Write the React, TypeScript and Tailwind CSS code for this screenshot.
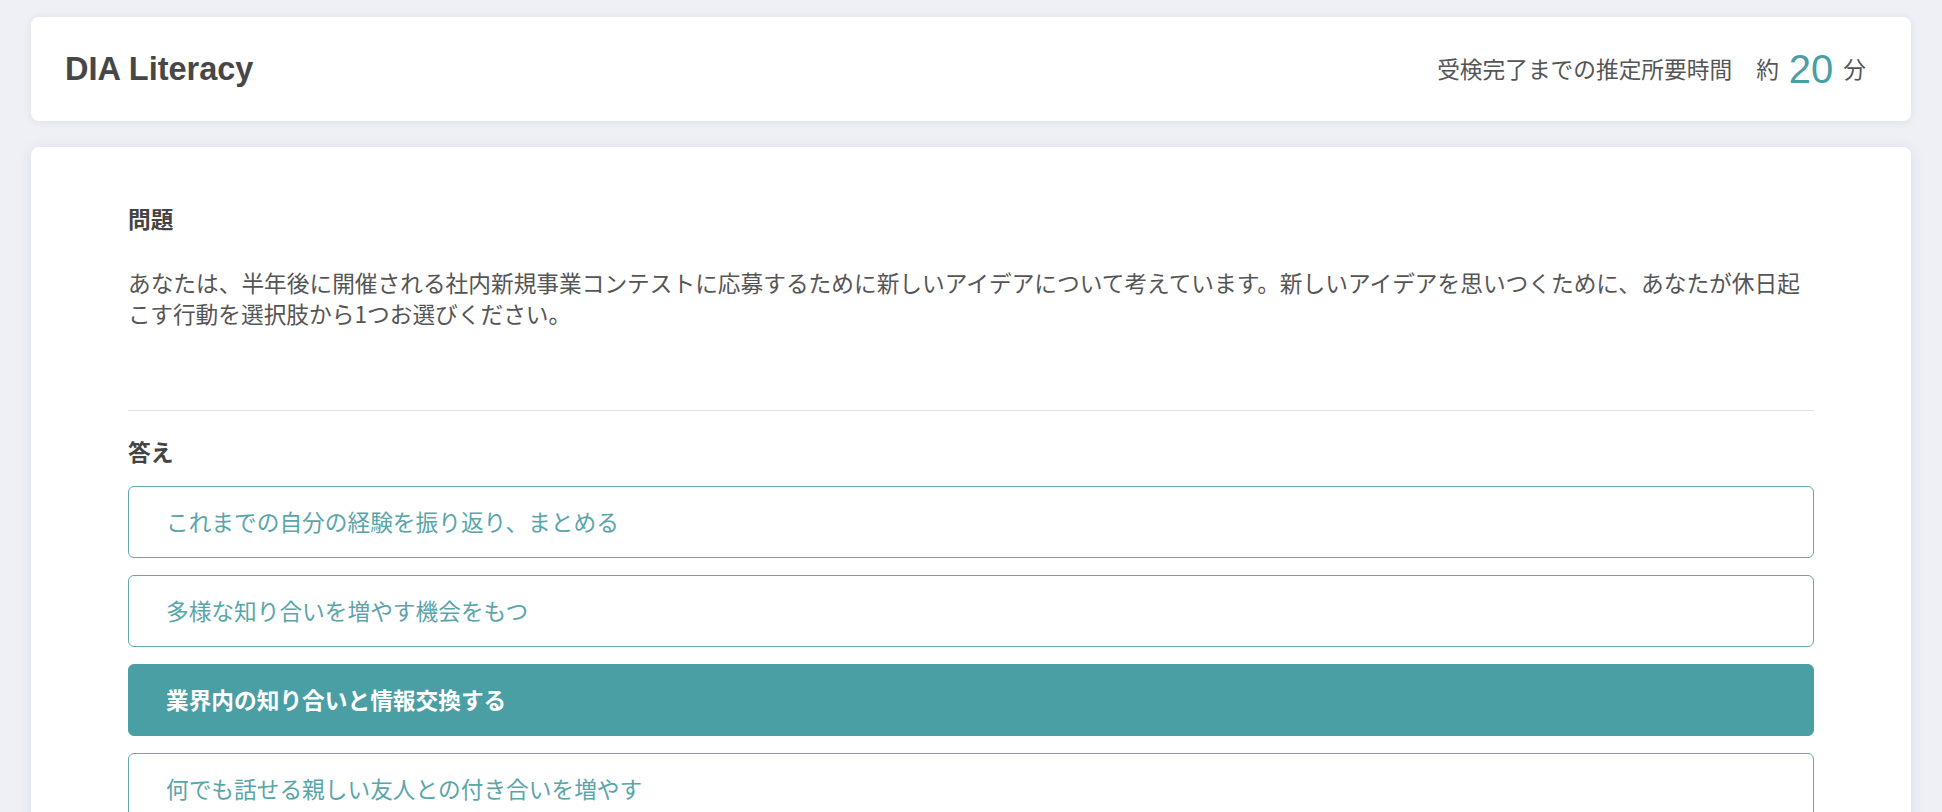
const JP = "font-['Noto_Sans_CJK_JP','Noto_Sans',sans-serif]";

const OPTIONS = [
  { id: 1, label: 'これまでの自分の経験を振り返り、まとめる', selected: false },
  { id: 2, label: '多様な知り合いを増やす機会をもつ', selected: false },
  { id: 3, label: '業界内の知り合いと情報交換する', selected: true },
  { id: 4, label: '何でも話せる親しい友人との付き合いを増やす', selected: false },
];

export default function App() {
  return (
    <div className={`min-h-screen bg-[#eef0f6] px-[31px] pt-[17px] pb-[40px] ${JP}`}>
      {/* Header */}
      <header className="flex h-[104px] items-center justify-between rounded-[8px] bg-white pl-[34px] pr-[45px] shadow-[0_1px_8px_rgba(30,40,80,0.08)]">
        <h1 className="font-['Liberation_Sans',Arial,sans-serif] text-[32.5px] font-bold text-[#474747]">DIA Literacy</h1>
        <div className="flex items-center text-[22.7px] text-[#555]">
          <span>受検完了までの推定所要時間</span>
          <span className="ml-[24px]">約</span>
          <span className="mx-[10px] font-['Liberation_Sans',Arial,sans-serif] text-[40px] leading-none text-[#4a9fa5]">20</span>
          <span>分</span>
        </div>
      </header>

      {/* Question card */}
      <main className="mt-[26px] rounded-[8px] bg-white px-[97px] pt-[56px] pb-[60px] shadow-[0_1px_14px_rgba(30,40,80,0.09)]">
        <section>
          <h2 className="text-[22.7px] font-bold leading-[31.6px] text-[#444]">問題</h2>
          <p className="mt-[32px] text-[22.7px] leading-[31.6px] text-[#555]">
            あなたは、半年後に開催される社内新規事業コンテストに応募するために新しいアイデアについて考えています。新しいアイデアを思いつくために、あなたが休日起こす行動を選択肢から1つお選びください。
          </p>
        </section>

        <hr className="mt-[80px] border-t border-[#e2e2e2]" />

        <section className="mt-[25px]">
          <h2 className="text-[22.7px] font-bold leading-[31.6px] text-[#444]">答え</h2>
          <div className="mt-[19px] flex flex-col gap-[17px]">
            {OPTIONS.map((opt) => (
              <button
                key={opt.id}
                className={
                  opt.selected
                    ? 'flex h-[72px] items-center rounded-[6px] border-[1.5px] border-[#4a9fa5] bg-[#4a9fa5] pl-[37px] text-left text-[22.7px] font-bold text-white'
                    : 'flex h-[72px] items-center rounded-[6px] border-[1.5px] border-[#62a9ad] bg-white pl-[37px] text-left text-[22.7px] text-[#5aa5aa]'
                }
              >
                {opt.label}
              </button>
            ))}
          </div>
        </section>
      </main>
    </div>
  );
}
